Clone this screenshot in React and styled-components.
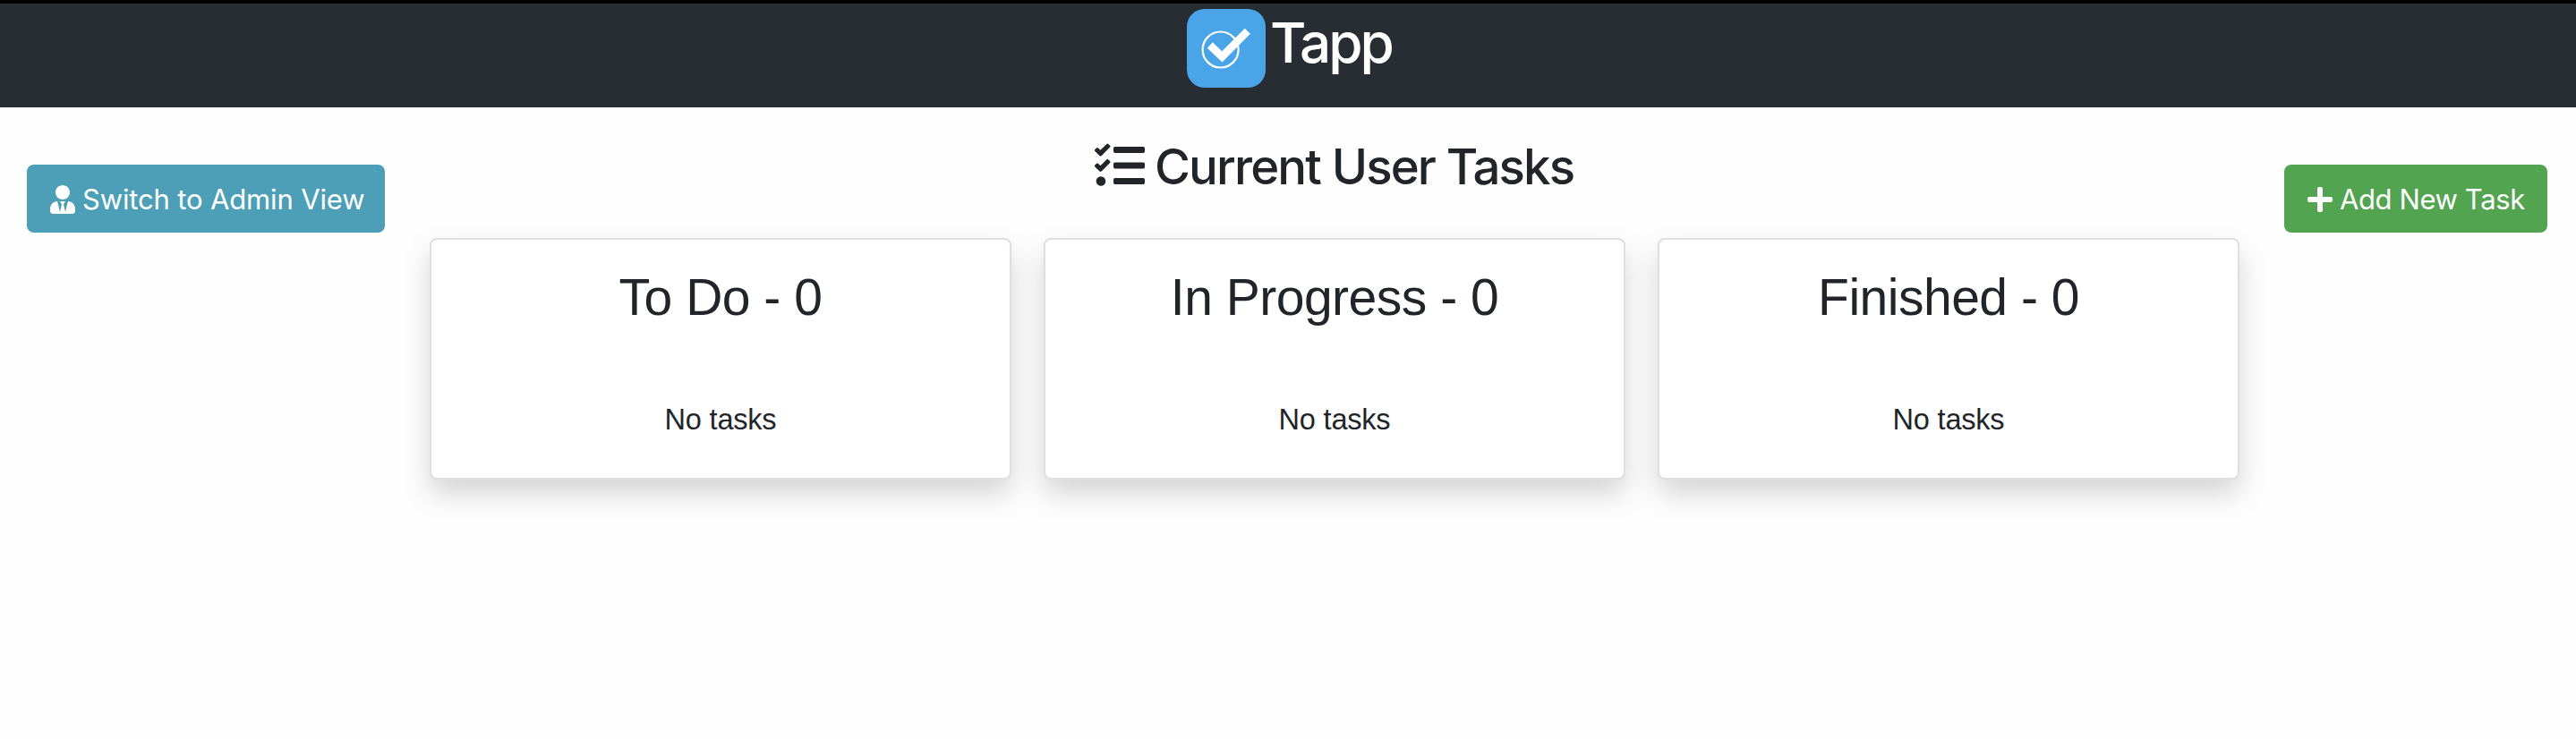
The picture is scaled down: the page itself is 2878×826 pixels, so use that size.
import React from "react";
import styled, { createGlobalStyle } from "styled-components";
import { FaTasks, FaUserTie, FaPlus } from "react-icons/fa";

const GlobalStyle = createGlobalStyle`
  * { box-sizing: border-box; }
  body { margin: 0; background: #fefefe; color: #212529; font-family: Inter, "Liberation Sans", sans-serif; }
  h1, h2, h3, p { margin: 0; }
`;

const Page = styled.div`
  min-height: 826px;
  display: flex;
  flex-direction: column;
`;

const Header = styled.header`
  height: 120px;
  padding: 6px 0 0 1326px;
  display: flex;
  align-items: flex-start;
  gap: 5px;
  background: #282d34;
  border-top: 4px solid #030303;
  color: #fff;
`;

const Logo = styled.svg`
  width: 88px;
  height: 88px;
  flex: none;
`;

const Brand = styled.h1`
  font-size: 62px;
  line-height: 76px;
  font-weight: 500;
  letter-spacing: -3px;
  white-space: nowrap;
`;

const Main = styled.main`
  display: grid;
  grid-template-columns: 450px 1fr 346px;
  padding: 0 32px 0 30px;
`;

const Side = styled.div`
  padding-top: 64px;
  display: flex;
  align-items: flex-start;
  justify-content: ${(p) => (p.$end ? "flex-end" : "flex-start")};
`;

const Button = styled.button`
  width: ${(p) => p.$width};
  height: 76px;
  padding: 1px 0 0 26px;
  display: flex;
  align-items: center;
  gap: 8px;
  border: 0;
  border-radius: 8px;
  background: ${(p) => p.$bg};
  color: #fff;
  font: 380 31px/48px Inter, sans-serif;
  letter-spacing: ${(p) => p.$tracking};
  white-space: nowrap;

  svg { width: 28px; height: 32px; flex: none; }
`;

const Board = styled.section`
  min-width: 0;
`;

const Heading = styled.h2`
  height: 146px;
  padding: 33px 0 0 743px;
  display: flex;
  align-items: flex-start;
  gap: 11px;
  font-size: 54.5px;
  line-height: 67px;
  font-weight: 500;
  letter-spacing: -1.85px;
  white-space: nowrap;

  svg { width: 56px; height: 56px; margin-top: 4px; flex: none; }
`;

const Columns = styled.div`
  display: grid;
  grid-template-columns: repeat(3, 650px);
  gap: 36px;
`;

const Card = styled.article`
  height: 270px;
  padding-top: 30px;
  background: #fff;
  border: 2px solid #dfdfdf;
  border-radius: 8px;
  box-shadow: 0 16px 32px rgba(0, 0, 0, 0.17);
  font-family: "Liberation Sans", sans-serif;
  text-align: center;
`;

const CardTitle = styled.h3`
  font-size: 57px;
  line-height: 68px;
  font-weight: 400;
  letter-spacing: -0.5px;
`;

const Empty = styled.p`
  margin-top: 79px;
  font-size: 32.5px;
  line-height: 48px;
  letter-spacing: -0.2px;
`;

const columns = ["To Do", "In Progress", "Finished"];

export default function App() {
  return (
    <Page>
      <GlobalStyle />
      <Header>
        <Logo viewBox="0 0 88 88">
          <rect width="88" height="88" rx="20" fill="#4aa5e8" />
          <circle cx="37.6" cy="45.5" r="20" fill="none" stroke="#fff" strokeWidth="2.2" />
          <path d="M25.8 40.5 L39.4 53.4 L67.8 24.8" fill="none" stroke="#fff" strokeWidth="8.7" />
        </Logo>
        <Brand>Tapp</Brand>
      </Header>
      <Main>
        <Side>
          <Button $bg="#4c9fb6" $width="400px" $tracking="-0.15px">
            <FaUserTie />
            Switch to Admin View
          </Button>
        </Side>
        <Board>
          <Heading>
            <FaTasks />
            Current User Tasks
          </Heading>
          <Columns>
            {columns.map((name) => (
              <Card key={name}>
                <CardTitle>{name} - 0</CardTitle>
                <Empty>No tasks</Empty>
              </Card>
            ))}
          </Columns>
        </Board>
        <Side $end>
          <Button $bg="#53a451" $width="294px" $tracking="-0.4px">
            <FaPlus />
            Add New Task
          </Button>
        </Side>
      </Main>
    </Page>
  );
}
